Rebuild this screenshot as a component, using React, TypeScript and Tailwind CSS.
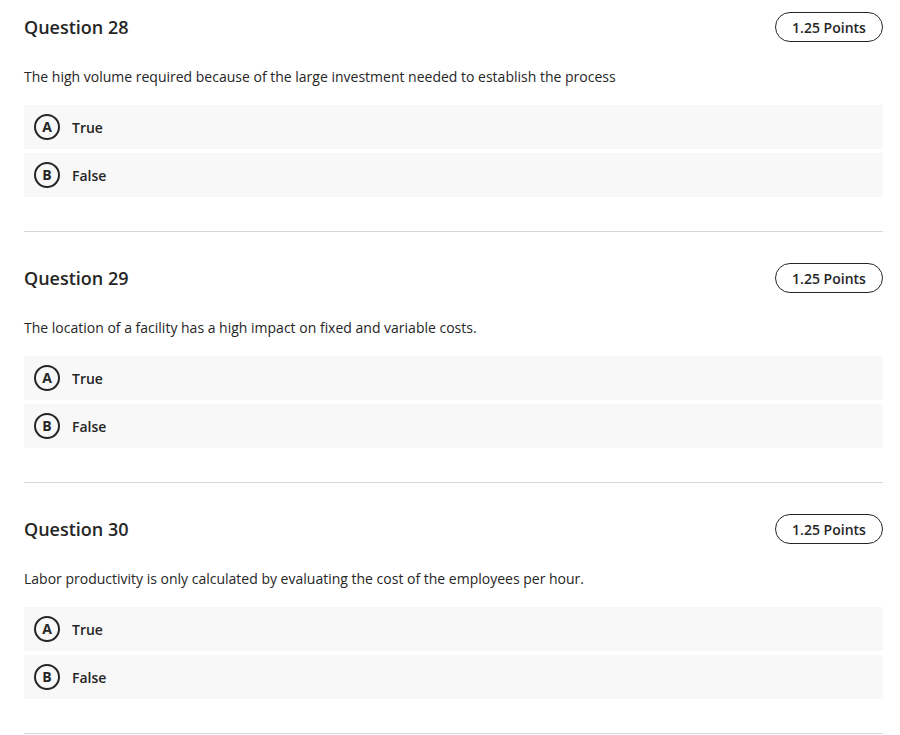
import React from "react";

const questions = [
  {
    n: 28,
    text: "The high volume required because of the large investment needed to establish the process",
  },
  {
    n: 29,
    text: "The location of a facility has a high impact on fixed and variable costs.",
  },
  {
    n: 30,
    text: "Labor productivity is only calculated by evaluating the cost of the employees per hour.",
  },
];

const options = [
  { key: "A", label: "True" },
  { key: "B", label: "False" },
];

const Question = ({ n, text }: { n: number; text: string }) => (
  <section className="pt-[31px] first:pt-3 pb-[34px] border-b border-[#d9d9d9]">
    <div className="flex items-center justify-between h-[30px]">
      <h2 className="text-[18px] font-semibold text-[#262626]">Question {n}</h2>
      <span className="h-[30px] w-[108px] flex items-center justify-center rounded-full border border-[#262626] text-[14px] font-semibold text-[#262626]">
        1.25 Points
      </span>
    </div>
    <p className="mt-[25px] text-[14px] leading-5 text-[#262626]">{text}</p>
    <div className="mt-[18px] flex flex-col gap-1">
      {options.map((o) => (
        <div
          key={o.key}
          className="h-11 bg-[#f8f8f8] flex items-center pl-[10px] gap-3"
        >
          <span className="shrink-0 box-border w-[26px] h-[26px] rounded-full border-2 border-[#262626] flex items-center justify-center text-[14px] leading-none font-bold text-[#262626]">
            {o.key}
          </span>
          <span className="text-[14px] font-semibold text-[#262626]">{o.label}</span>
        </div>
      ))}
    </div>
  </section>
);

export default function App() {
  return (
    <div
      className="bg-white min-h-screen pl-6 pr-[17px]"
      style={{ fontFamily: '"Open Sans", sans-serif' }}
    >
      {questions.map((q) => (
        <Question key={q.n} n={q.n} text={q.text} />
      ))}
    </div>
  );
}
